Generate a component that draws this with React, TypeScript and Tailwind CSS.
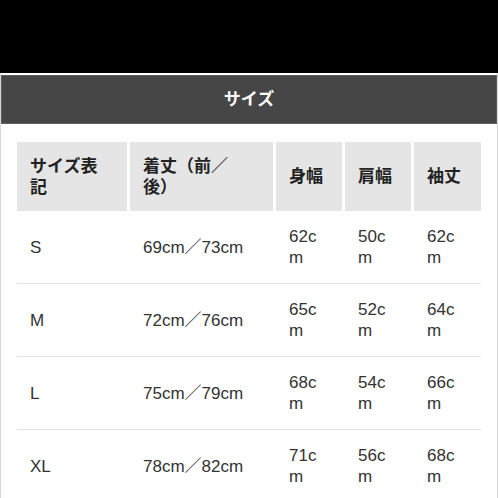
import React from "react";

const cols = "grid grid-cols-[110px_143px_66px_66px_67px] gap-x-[3px]";

const headers: string[][] = [["サイズ表", "記"], ["着丈（前／", "後）"], ["身幅"], ["肩幅"], ["袖丈"]];

const rows = [
  ["S", "69cm／73cm", "62cm", "50cm", "62cm"],
  ["M", "72cm／76cm", "65cm", "52cm", "64cm"],
  ["L", "75cm／79cm", "68cm", "54cm", "66cm"],
  ["XL", "78cm／82cm", "71cm", "56cm", "68cm"],
];

export default function App() {
  return (
    <div
      className="w-[498px] h-[498px] overflow-hidden bg-white flex flex-col"
      style={{ fontFamily: '"Liberation Sans", Arial, "Noto Sans CJK JP", sans-serif' }}
    >
      <div className="h-[73px] shrink-0 bg-black" />
      <div className="flex-1 flex flex-col border-x border-[#d6d6d6] pt-[2px]">
        <div className="h-[49px] shrink-0 bg-[#464646] border border-[#5e5e5e] flex items-center justify-center text-white font-bold text-[17px]">
          サイズ
        </div>
        <div className="pt-[18px] pl-[16px]">
          <div className={cols}>
            {headers.map((h, i) => (
              <div
                key={i}
                className="h-[69px] bg-[#e5e5e5] flex items-center px-[13px] text-[17px] leading-[21px] font-bold text-[#222]"
              >
                <span className="flex flex-col">
                  {h.map((l, j) => (
                    <span key={j}>{l}</span>
                  ))}
                </span>
              </div>
            ))}
          </div>
          {rows.map((r) => (
            <div key={r[0]} className={`${cols} h-[73px] border-b border-[#e3e3e3] w-[464px]`}>
              {r.map((c, i) => (
                <div
                  key={i}
                  className="flex items-center px-[13px] text-[17px] leading-[21px] text-[#333] break-all"
                >
                  <span>{c}</span>
                </div>
              ))}
            </div>
          ))}
        </div>
      </div>
    </div>
  );
}
